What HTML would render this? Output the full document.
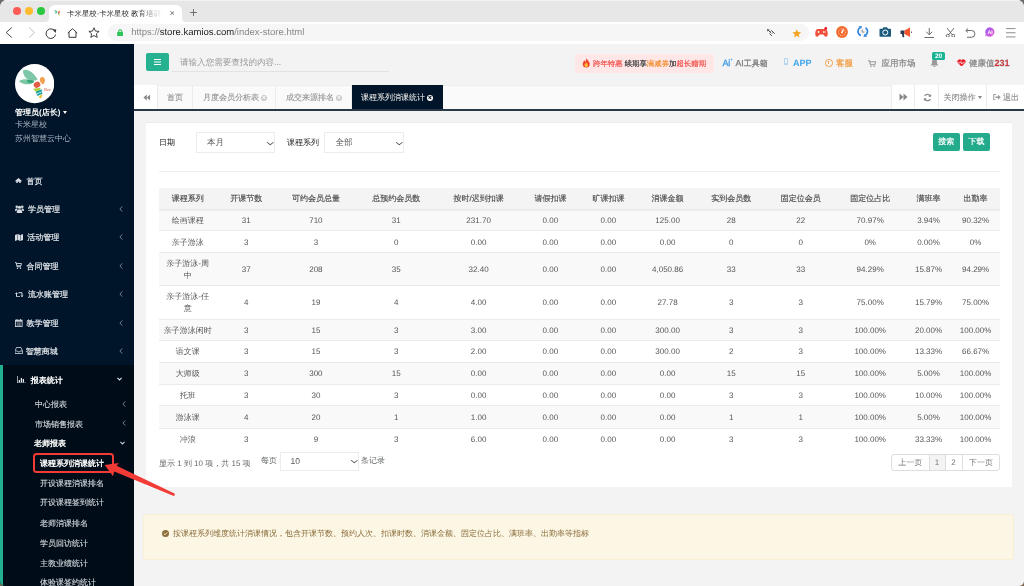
<!DOCTYPE html>
<html><head><meta charset="utf-8">
<style>
*{box-sizing:border-box;margin:0;padding:0}
html,body{width:1024px;height:586px;overflow:hidden;background:linear-gradient(#6a6a6a 50%,#7b6850 50%)}
body{text-rendering:geometricPrecision;font-family:"Liberation Sans",sans-serif;font-size:8px;color:#676a6c;position:relative}
.abs{position:absolute}
#win{will-change:transform;position:absolute;left:0;top:0;width:1024px;height:586px;border-radius:7px 7px 5px 5px;overflow:hidden;background:#f3f3f4}
/* browser chrome */
#tabbar{left:0;top:0;width:1024px;height:22px;background:#e7e7e7;box-shadow:inset 0 1px 0 #f2f2f2}
.light{width:8px;height:8px;border-radius:50%;top:7px}
#tab{left:49px;top:5px;width:133px;height:17px;background:#fff;border-radius:6px 6px 0 0}
#tabtitle{left:66.8px;top:7.5px;font-size:8px;color:#333;white-space:nowrap;width:106px;overflow:hidden;line-height:11px;transform:scale(0.93);transform-origin:0 50%;-webkit-mask-image:linear-gradient(90deg,#000 72%,transparent 97%)}
#addr{left:0;top:22px;width:1024px;height:22px;background:#fff}
#omni{left:107.5px;top:23.9px;width:701px;height:16.9px;background:#f6f6f6;border-radius:8.3px}
#url{left:131.2px;top:27px;font-size:9.5px;line-height:12px;color:#888;white-space:nowrap}
#url b{font-weight:normal;color:#222}
/* sidebar */
#side{left:0;top:44px;width:134px;height:542px;background:#001529}
#sub{left:0;top:365px;width:134px;height:221px;background:#000c17;border-left:3px solid #22b08f}
.mi{position:absolute;left:15px;color:#e2e6eb;font-size:8px;line-height:10px;white-space:nowrap;-webkit-text-stroke:0.2px #e2e6eb}
.mi .ic{display:inline-block;width:8px;margin-right:4px}
.chev{position:absolute;left:118px;color:#8e98a4;font-size:8px;line-height:10px}
.si{position:absolute;left:40px;color:#d3d8de;font-size:8px;line-height:10px;white-space:nowrap;-webkit-text-stroke:0.12px #d3d8de}
/* header */
#hdr{left:134px;top:44px;width:890px;height:41px;background:#f3f3f4}
#tabs{left:134px;top:85px;width:890px;height:25.5px;background:#fafafa;border-bottom:2px solid #2a394a;box-shadow:inset 0 1px 0 #eeeeee}
.x{display:inline-block;width:6px;height:6px;border-radius:50%;background:#c8c8c8;margin-left:2px;vertical-align:-0.5px;position:relative}
.x::before,.x::after{content:"";position:absolute;left:1.2px;top:2.55px;width:3.6px;height:0.9px;background:#fafafa;transform:rotate(45deg)}
.x::after{transform:rotate(-45deg)}
.x.w{background:#fff}.x.w::before,.x.w::after{background:#001529}
.tb{position:absolute;top:0;height:23.5px;line-height:25px;border-right:1px solid #ececec;color:#939393;font-size:8px;text-align:center;white-space:nowrap;-webkit-text-stroke:0.1px #939393}
/* panel */
#panel{left:146px;top:122px;width:866px;height:365px;background:#fff;border-top:1px solid #e9ebed}
.sel{position:absolute;height:20.2px;border:1px solid #ececec;background:#fff;color:#555;font-size:8.5px;line-height:18px;padding-left:10px}
.btn{position:absolute;height:18px;background:#23ab8c;color:#fff;border-radius:2px;font-size:8px;line-height:18px;text-align:center;-webkit-text-stroke:0.2px #fff}
.trh,.tr{position:absolute;left:159px;width:841px}
.trh{box-sizing:border-box;border-bottom:1px solid #ececec;background:#f4f4f4;color:#4a4a4a;-webkit-text-stroke:0.15px #4a4a4a}
.tr{border-top:1px solid #ebebeb;color:#555}
.tr.s{background:#f9f9f9}
.c{position:absolute;top:50%;transform:translate(-50%,calc(-50% + 0.8px));white-space:nowrap;text-align:center;font-size:8px;line-height:11.5px}
.lbl{color:#333;font-size:8px;line-height:10px;white-space:nowrap;-webkit-text-stroke:0.05px #333}
.dd{position:absolute;right:0.6px;top:8px;width:6px;height:3.6px;background:none}
.dd::before{content:"";position:absolute;left:0.9px;top:-1.6px;width:3.6px;height:3.6px;border-right:0.9px solid #555;border-bottom:0.9px solid #555;transform:scaleY(0.75) rotate(45deg)}
.pgi{top:454.5px;height:15.5px;line-height:15.5px;text-align:center;color:#777;font-size:8px}
#notice{left:143px;top:514.3px;width:871.4px;height:45.7px;background:#fcf6e4;border-radius:3px;border:1px solid #faefd5}
</style></head><body>
<div id="win">
  <div id="tabbar" class="abs"></div>
  <div class="abs light" style="left:12.5px;background:#fd5b55"></div>
  <div class="abs light" style="left:24.5px;background:#febc2e"></div>
  <div class="abs light" style="left:36.5px;background:#2ac840"></div>
  <div id="tab" class="abs"></div>
  <div class="abs" style="left:45px;top:18px;width:4px;height:4px;background:#fff"></div>
  <div class="abs" style="left:45px;top:18px;width:4px;height:4px;background:#e7e7e7;border-bottom-right-radius:4px"></div>
  <div class="abs" style="left:182px;top:18px;width:4px;height:4px;background:#fff"></div>
  <div class="abs" style="left:182px;top:18px;width:4px;height:4px;background:#e7e7e7;border-bottom-left-radius:4px"></div>
  <div id="tabtitle" class="abs">卡米星校-卡米星校 教育培训机构</div>
  <svg class="abs" style="left:169.7px;top:10.8px" width="4.6" height="4.2" viewBox="0 0 4.6 4.2"><path d="M0.2 0.1 L4.4 4.1 M4.4 0.1 L0.2 4.1" stroke="#555" stroke-width="0.8"/></svg>
  <svg class="abs" style="left:190px;top:9px" width="7" height="7" viewBox="0 0 7 7"><path d="M3.5 0 V7 M0 3.5 H7" stroke="#555" stroke-width="0.8"/></svg>
  <div id="addr" class="abs"></div>
  <div id="omni" class="abs"></div>
  <div id="url" class="abs">https://<b>store.kamios.com</b>/index-store.html</div>


  <svg class="abs" style="left:5px;top:27px" width="8" height="11" viewBox="0 0 8 11"><path d="M6.8 0.5 L1.2 5.5 L6.8 10.5" fill="none" stroke="#4a4a4a" stroke-width="1"/></svg>
  <svg class="abs" style="left:27.5px;top:27px" width="8" height="11" viewBox="0 0 8 11"><path d="M1 0.5 L6.6 5.5 L1 10.5" fill="none" stroke="#c0c0c0" stroke-width="1"/></svg>
  <svg class="abs" style="left:45px;top:27.5px" width="12" height="11" viewBox="0 0 12 11"><path d="M10.3 3.8 A4.8 4.8 0 1 0 10.6 6.5" fill="none" stroke="#3a3a3a" stroke-width="1"/><path d="M7.6 1.2 L11.3 1.4 L10.6 5Z" fill="#3a3a3a"/></svg>
  <svg class="abs" style="left:66.5px;top:27.5px" width="11" height="10" viewBox="0 0 11 10"><path d="M0.8 5 L5.5 0.7 L10.2 5 M2 4 V9.3 H9 V4" fill="none" stroke="#3a3a3a" stroke-width="1"/></svg>
  <svg class="abs" style="left:88px;top:26.5px" width="12" height="11.5" viewBox="0 0 24 23"><path d="M12 1.5 L14.9 8.2 L22.2 8.8 L16.7 13.6 L18.4 20.8 L12 17 L5.6 20.8 L7.3 13.6 L1.8 8.8 L9.1 8.2Z" fill="none" stroke="#3a3a3a" stroke-width="1.9" stroke-linejoin="miter"/></svg>
  <svg class="abs" style="left:116.8px;top:28.8px" width="6.5" height="7.5" viewBox="0 0 6.5 7.5"><path d="M1.7 3.5 V2.4 A1.55 1.55 0 0 1 4.8 2.4 V3.5" fill="none" stroke="#2bc458" stroke-width="1.1"/><rect x="0.2" y="3" width="6.1" height="4.2" rx="0.4" fill="#2bc458"/></svg>
  <svg class="abs" style="left:766.8px;top:28.8px" width="8.5" height="7.5" viewBox="0 0 17 15"><path d="M1.5 1.5 L8 8 M5 9 L10 14 M9 3 L15.5 9.5 M9 3 L6.5 5.5 M12.5 6.5 L10 9" fill="none" stroke="#555" stroke-width="2"/><path d="M0 0 L5.5 1 L1 5.5Z" fill="#555"/></svg>
  <svg class="abs" style="left:791.5px;top:28.5px" width="9.5" height="9" viewBox="0 0 24 23"><path d="M12 0.5 L15.2 7.8 L23.2 8.5 L17.1 13.8 L19 21.6 L12 17.4 L5 21.6 L6.9 13.8 L0.8 8.5 L8.8 7.8Z" fill="#f5a425"/></svg>
  <svg class="abs" style="left:814.5px;top:26.5px" width="13" height="10" viewBox="0 0 26 20"><path d="M6 4 H20 C24 4 25.5 9 25.5 14 C25.5 18 23.5 19.5 21.5 19.5 C19.5 19.5 18 16 16.5 15 H9.5 C8 16 6.5 19.5 4.5 19.5 C2.5 19.5 0.5 18 0.5 14 C0.5 9 2 4 6 4Z" fill="#f0503a"/><path d="M5 10 H9 M7 8 V12" stroke="#fff" stroke-width="1.6"/><circle cx="17" cy="10" r="1.3" fill="#fff"/><circle cx="20" cy="10" r="1.3" fill="#fff"/><circle cx="21.5" cy="2.8" r="2.8" fill="#e4162b"/></svg>
  <svg class="abs" style="left:836px;top:25.9px" width="12" height="12" viewBox="0 0 24 24"><circle cx="12" cy="12" r="11.8" fill="#f2682a"/><circle cx="12" cy="12.5" r="7" fill="none" stroke="#fff" stroke-width="1.4" stroke-dasharray="2 2.2"/><path d="M10 14.5 C10 11 13 7 15.5 5 C16 8 14.5 12 12.5 15Z" fill="#fff"/></svg>
  <svg class="abs" style="left:857.4px;top:25.9px" width="11.5" height="11.2" viewBox="0 0 23 22"><path d="M6 3 A9 9 0 0 0 8 19" fill="none" stroke="#2a82de" stroke-width="3.2"/><path d="M17 3 A9 9 0 0 1 15 19" fill="none" stroke="#2a82de" stroke-width="3.2"/><path d="M2.5 0.5 H10.5 L8 5.5Z M12.5 21.5 H20.5 L15 16.5Z" fill="#2a82de"/><circle cx="11.5" cy="11" r="6" fill="#eceff3"/><path d="M10.5 7 V12 H14.5" fill="none" stroke="#666" stroke-width="1.3"/></svg>
  <svg class="abs" style="left:878.5px;top:27px" width="12.5" height="10" viewBox="0 0 25 20"><path d="M1 5 Q1 3.5 2.5 3.5 H7 L9 0.5 H16 L18 3.5 H22.5 Q24 3.5 24 5 V18 Q24 19.5 22.5 19.5 H2.5 Q1 19.5 1 18Z" fill="#1d5b7d"/><circle cx="12.5" cy="11" r="5" fill="none" stroke="#fff" stroke-width="2"/></svg>
  <svg class="abs" style="left:899.5px;top:27px" width="13" height="10.5" viewBox="0 0 26 21"><path d="M1 7 H9 V14 H1Z M4 14 H8 L8.5 20.5 H5Z" fill="#2b3a55"/><path d="M9 7 L20 1 V20 L9 14Z" fill="#f2552c"/><path d="M23 9 V12" stroke="#2b3a55" stroke-width="1.5"/></svg>
  <svg class="abs" style="left:924px;top:27.5px" width="10.5" height="10" viewBox="0 0 21 20"><path d="M10.5 0 V13 M4.5 7.5 L10.5 13.5 L16.5 7.5 M1 19 H20" fill="none" stroke="#444" stroke-width="1.6"/></svg>
  <svg class="abs" style="left:944.5px;top:27.5px" width="11" height="9.5" viewBox="0 0 22 19"><path d="M4 0 L14.5 13.5 M18 0 L7.5 13.5" stroke="#444" stroke-width="1.5"/><circle cx="5.5" cy="15.5" r="3" fill="none" stroke="#444" stroke-width="1.5"/><circle cx="16.5" cy="15.5" r="3" fill="none" stroke="#444" stroke-width="1.5"/></svg>
  <svg class="abs" style="left:965px;top:27.5px" width="10.5" height="10" viewBox="0 0 21 20"><path d="M3 5 H13 A6.5 6.5 0 0 1 13 18.5 H4" fill="none" stroke="#444" stroke-width="1.6"/><path d="M6 1 L1.5 5 L6 9" fill="none" stroke="#444" stroke-width="1.6"/></svg>
  <svg class="abs" style="left:984.5px;top:27.3px" width="10" height="10" viewBox="0 0 20 20"><defs><linearGradient id="ai" x1="0" y1="0" x2="1" y2="1"><stop offset="0" stop-color="#8e5af5"/><stop offset="1" stop-color="#f060d0"/></linearGradient></defs><path d="M10 0.5 A9.5 9.5 0 1 1 3 17 L0.5 19.5 L1.5 14 A9.5 9.5 0 0 1 10 0.5Z" fill="url(#ai)"/><text x="10.3" y="14" font-size="10.5" font-weight="bold" fill="#fff" text-anchor="middle" font-family="Liberation Sans">AI</text></svg>
  <svg class="abs" style="left:1006px;top:28px" width="10" height="9.5" viewBox="0 0 20 19"><path d="M0 1.2 H19 M0 9.5 H19 M0 17.8 H19" stroke="#5a5a5a" stroke-width="1.4"/></svg>
  <svg class="abs" style="left:54px;top:9px" width="7" height="7" viewBox="0 0 14 14"><path d="M0 3 Q5 1 7 6 Q4 7 0 3Z" fill="#4caf80"/><path d="M1 8 Q5 5 7 7 Q4 10 1 8Z" fill="#5cc090"/><circle cx="9.5" cy="7" r="2" fill="#e85a3c"/><circle cx="11" cy="4.5" r="1.5" fill="#f0a040"/><path d="M7 9 L11 9 L9.5 12Z" fill="#2aa7a0"/><circle cx="10.5" cy="12" r="1.3" fill="#f2c230"/></svg>
  <div id="side" class="abs"></div>
  <div id="sub" class="abs"></div>
  <svg class="abs" style="left:15px;top:64.4px" width="39.3" height="39.3" viewBox="58 75 460 460">
    <circle cx="288" cy="305" r="230" fill="#fff"/>
    <path d="M152 150 C170 128 235 148 272 188 C300 218 318 242 322 256 C292 276 238 280 200 250 C168 224 150 190 152 150Z" fill="#7dc6a6"/>
    <path d="M105 276 C130 250 205 250 268 262 L282 286 C240 322 168 326 105 276Z" fill="#7dc6a6"/>
    <path d="M200 264 C232 262 262 266 280 276 L268 298 C242 302 220 296 198 282Z" fill="#38a877"/>
    <path d="M372 226 C397 223 412 245 410 270 C407 292 392 306 386 316 C366 301 346 282 349 256 C351 238 359 229 372 226Z" fill="#f1a352"/>
    <ellipse cx="316" cy="318" rx="40" ry="34" transform="rotate(-28 316 318)" fill="#e35c44"/>
    <path d="M268 366 L362 352 L322 418Z" fill="#b3ce3e"/>
    <path d="M300 402 L368 372 L378 394 L308 424Z" fill="#1ea5a6"/>
    <path d="M314 430 L374 404 L380 422 L322 450Z" fill="#1ea5a6"/>
    <path d="M340 452 L376 430 C380 452 372 472 356 480 C344 472 336 462 340 452Z" fill="#f3c233"/>
    <text x="398" y="392" font-size="52" fill="#d4503c" font-family="Liberation Serif" font-style="italic">Bee</text>
  </svg>
  <div class="abs" style="left:15px;top:107px;color:#fff;font-weight:bold;font-size:8px;line-height:11px;white-space:nowrap">管理员(店长)<span style="display:inline-block;border-top:3px solid #fff;border-left:2.6px solid transparent;border-right:2.6px solid transparent;margin-left:2.5px;vertical-align:1.5px"></span></div>
  <div class="abs" style="left:15px;top:119.6px;color:#a7b1c2;font-size:8px;line-height:10px">卡米星校</div>
  <div class="abs" style="left:15px;top:134.3px;color:#a7b1c2;font-size:8px;line-height:10px">苏州智慧云中心</div>

  <svg class="abs" style="left:15.4px;top:177.5px" width="7" height="5.5" viewBox="0 0 14 11"><path d="M7 0 L0 6 L1 7 L2.5 5.8 V11 H5.5 V7.5 H8.5 V11 H11.5 V5.8 L13 7 L14 6Z" fill="#d8dde4"/></svg>
  <div class="mi" style="left:26.6px;top:177.2px">首页</div>
  <svg class="abs" style="left:15px;top:205px" width="9" height="8" viewBox="0 0 18 16"><circle cx="9" cy="4.5" r="3.2" fill="#d8dde4"/><circle cx="3.5" cy="3.5" r="2.5" fill="#d8dde4"/><circle cx="14.5" cy="3.5" r="2.5" fill="#d8dde4"/><path d="M3.5 16 C3.5 10 5.5 8.5 9 8.5 C12.5 8.5 14.5 10 14.5 16Z M0 12 C0 8 1.5 7 3.5 7 C5 7 5.5 7.5 5.5 8 C4 9 3 10.5 3 12Z M18 12 C18 8 16.5 7 14.5 7 C13 7 12.5 7.5 12.5 8 C14 9 15 10.5 15 12Z" fill="#d8dde4"/></svg>
  <div class="mi" style="left:27.9px;top:205.2px">学员管理</div>
  <svg class="abs" style="left:15px;top:234px" width="8" height="7" viewBox="0 0 16 14"><path d="M0 2 L5 0 V12 L0 14Z M5.8 0 L10.2 2 V14 L5.8 12Z M11 2 L16 0 V12 L11 14Z" fill="#d8dde4"/></svg>
  <div class="mi" style="left:27.3px;top:233.4px">活动管理</div>
  <svg class="abs" style="left:15.4px;top:262px" width="7" height="7" viewBox="0 0 14 14"><path d="M0 1.2 H2.5 L4 9.5 H12 M3 3 H13 L12 7.5 H3.8" fill="none" stroke="#d8dde4" stroke-width="1.8"/><circle cx="5" cy="12.3" r="1.5" fill="#d8dde4"/><circle cx="11" cy="12.3" r="1.5" fill="#d8dde4"/></svg>
  <div class="mi" style="left:26.5px;top:261.6px">合同管理</div>
  <svg class="abs" style="left:15px;top:291.5px" width="8.5" height="5.5" viewBox="0 0 17 11"><path d="M3 3.5 V9.5 H10 M7 1.5 H14 V7.5" fill="none" stroke="#d8dde4" stroke-width="2"/><path d="M0 4 L3 0.3 L6 4Z M11 7 L14 10.7 L17 7Z" fill="#d8dde4"/></svg>
  <div class="mi" style="left:27.9px;top:290.2px">流水账管理</div>
  <svg class="abs" style="left:15.4px;top:318.5px" width="7.5" height="8" viewBox="0 0 15 16"><rect x="0.8" y="2.3" width="13.4" height="12.9" fill="none" stroke="#d8dde4" stroke-width="1.6"/><rect x="0.8" y="2.3" width="13.4" height="3" fill="#d8dde4"/><path d="M4 0 V3.5 M11 0 V3.5" stroke="#d8dde4" stroke-width="1.6"/><path d="M3 8 H12 M3 10.5 H12 M3 13 H12 M5.5 6 V15 M9.5 6 V15" stroke="#d8dde4" stroke-width="0.7"/></svg>
  <div class="mi" style="left:26.5px;top:318.9px">教学管理</div>
  <svg class="abs" style="left:15px;top:347px" width="7.5" height="7" viewBox="0 0 15 14"><path d="M3 1 H12 L15 8 V13 H0 V8Z" fill="none" stroke="#d8dde4" stroke-width="1.6"/><path d="M1 8 H5 L6 10 H9 L10 8 H14" fill="none" stroke="#d8dde4" stroke-width="1.5"/></svg>
  <div class="mi" style="left:25.8px;top:347.0px">智慧商城</div>
  <svg class="abs" style="left:118.5px;top:205.5px" width="4" height="6" viewBox="0 0 4 6"><path d="M3.3 0.4 L0.9 3 L3.3 5.6" fill="none" stroke="#8a93a0" stroke-width="0.85"/></svg>
  <svg class="abs" style="left:118.5px;top:234.0px" width="4" height="6" viewBox="0 0 4 6"><path d="M3.3 0.4 L0.9 3 L3.3 5.6" fill="none" stroke="#8a93a0" stroke-width="0.85"/></svg>
  <svg class="abs" style="left:118.5px;top:262.5px" width="4" height="6" viewBox="0 0 4 6"><path d="M3.3 0.4 L0.9 3 L3.3 5.6" fill="none" stroke="#8a93a0" stroke-width="0.85"/></svg>
  <svg class="abs" style="left:118.5px;top:291.0px" width="4" height="6" viewBox="0 0 4 6"><path d="M3.3 0.4 L0.9 3 L3.3 5.6" fill="none" stroke="#8a93a0" stroke-width="0.85"/></svg>
  <svg class="abs" style="left:118.5px;top:319.5px" width="4" height="6" viewBox="0 0 4 6"><path d="M3.3 0.4 L0.9 3 L3.3 5.6" fill="none" stroke="#8a93a0" stroke-width="0.85"/></svg>
  <svg class="abs" style="left:118.5px;top:347.8px" width="4" height="6" viewBox="0 0 4 6"><path d="M3.3 0.4 L0.9 3 L3.3 5.6" fill="none" stroke="#8a93a0" stroke-width="0.85"/></svg>

  <svg class="abs" style="left:17.3px;top:375.5px" width="9" height="7.5" viewBox="0 0 18 15"><path d="M0.8 0 V14.2 H18" fill="none" stroke="#e6e9ee" stroke-width="1.5"/><path d="M3.5 13 V8 H6 V13Z M7.5 13 V4 H10 V13Z M11.5 13 V6 H14 V13Z" fill="#e6e9ee"/></svg>
  <div class="mi" style="left:30.7px;top:375.6px;color:#fff;-webkit-text-stroke:0.35px #fff">报表统计</div>
  <svg class="abs" style="left:117px;top:377px" width="5" height="4" viewBox="0 0 5 4"><path d="M0.4 0.8 L2.5 3 L4.6 0.8" fill="none" stroke="#e0e3e8" stroke-width="1.1"/></svg>
  <div class="si" style="left:35px;top:399.6px">中心报表</div><svg class="abs" style="left:122px;top:400.5px" width="4" height="6" viewBox="0 0 4 6"><path d="M3.3 0.4 L0.9 3 L3.3 5.6" fill="none" stroke="#8a93a0" stroke-width="0.85"/></svg>
  <div class="si" style="left:35px;top:419.6px">市场销售报表</div><svg class="abs" style="left:122px;top:420.3px" width="4" height="6" viewBox="0 0 4 6"><path d="M3.3 0.4 L0.9 3 L3.3 5.6" fill="none" stroke="#8a93a0" stroke-width="0.85"/></svg>
  <div class="si" style="left:34px;top:439.1px;color:#fff;-webkit-text-stroke:0.35px #fff">老师报表</div><svg class="abs" style="left:120px;top:440.5px" width="5" height="4" viewBox="0 0 5 4"><path d="M0.4 0.8 L2.5 3 L4.6 0.8" fill="none" stroke="#c8ccd2" stroke-width="1.1"/></svg>
  <div class="abs" style="left:33.3px;top:453.3px;width:80.5px;height:19.3px;border:2px solid #f23a36;border-radius:3.5px"></div>
  <div class="si" style="top:459.1px;color:#fff;-webkit-text-stroke:0.35px #fff">课程系列消课统计</div>
  <div class="si" style="top:479.1px">开设课程消课排名</div>
  <div class="si" style="top:498.1px">开设课程签到统计</div>
  <div class="si" style="top:519.1px">老师消课排名</div>
  <div class="si" style="top:538.6px">学员回访统计</div>
  <div class="si" style="top:558.6px">主教业绩统计</div>
  <div class="si" style="top:577.6px">体验课签约统计</div>

  <div id="hdr" class="abs"></div>
  <div class="abs" style="left:146px;top:53px;width:23px;height:18px;background:#26b190;border-radius:2px"></div>
  <div class="abs" style="left:154px;top:58.5px;width:7px;height:1.3px;background:#fff;box-shadow:0 2.5px 0 #fff,0 5px 0 #fff"></div>
  <div class="abs" style="left:180px;top:57px;color:#999;font-size:9px;line-height:11px;white-space:nowrap;transform:scale(0.95);transform-origin:0 50%">请输入您需要查找的内容...</div>
  <div class="abs" style="left:172px;top:71px;width:217px;height:1px;background:#e3e3e3"></div>


  <div class="abs" style="left:575px;top:54px;width:139px;height:18.7px;background:#ffe7e8;border-radius:2.5px"></div>
  <svg class="abs" style="left:581.5px;top:58.3px" width="8.5" height="9.5" viewBox="0 0 17 19"><path d="M8.5 0.5 C10 4 15.5 6.5 15.5 12 A7 7 0 0 1 1.5 12 C1.5 8.5 4 7 4.5 4.5 C6 6 6.5 7.5 6.5 8.5 C7.5 6 8.5 3.5 8.5 0.5Z" fill="#f2452e"/><path d="M8.5 9 C10.5 11 12 12.5 12 14.5 A3.5 3.5 0 0 1 5 14.5 C5 12.5 7 11.5 8.5 9Z" fill="#ffc02e"/></svg>
  <div class="abs" style="left:592.5px;top:58.5px;font-size:8px;line-height:10px;white-space:nowrap;transform:scale(0.925);transform-origin:0 50%"><span style="color:#f0504a;-webkit-text-stroke:0.2px #f0504a">跨年特惠</span> <span style="color:#333;-webkit-text-stroke:0.2px #333">续期享</span><span style="color:#f08c2e;-webkit-text-stroke:0.2px #f08c2e">满减券</span><span style="color:#333;-webkit-text-stroke:0.2px #333">加</span><span style="color:#f0504a;-webkit-text-stroke:0.2px #f0504a">超长赠期</span></div>
  <div class="abs" style="left:722.5px;top:57.8px;color:#3c9ae8;font-size:9px;line-height:10px;letter-spacing:-0.3px;-webkit-text-stroke:0.3px #3c9ae8">Ai</div>
  <svg class="abs" style="left:730px;top:57.5px" width="3" height="3" viewBox="0 0 6 6"><path d="M3 0 L3.7 2.3 L6 3 L3.7 3.7 L3 6 L2.3 3.7 L0 3 L2.3 2.3Z" fill="#3c9ae8"/></svg>
  <div class="abs" style="left:735.5px;top:58px;color:#777;font-size:8px;line-height:10px;white-space:nowrap;-webkit-text-stroke:0.25px #777"><span style="font-size:8.6px">AI</span>工具箱</div>
  <svg class="abs" style="left:784px;top:58.3px" width="4" height="7" viewBox="0 0 8 14"><rect x="0.8" y="0.8" width="6.4" height="12.4" rx="1.2" fill="none" stroke="#6db8f0" stroke-width="1.1"/><rect x="3" y="10.5" width="2" height="1.2" fill="#48a8ee"/></svg>
  <div class="abs" style="left:793px;top:58px;color:#3ea6ec;font-weight:bold;font-size:9px;line-height:10px">APP</div>
  <div class="abs" style="left:825px;top:59px;width:7.5px;height:7.5px;border:1.2px solid #f2a04a;border-radius:50%"></div>
  <div class="abs" style="left:828.3px;top:60.5px;width:1px;height:3px;background:#f2a04a"></div>
  <div class="abs" style="left:836px;top:58px;color:#f2a04a;font-size:8.5px;line-height:10px;white-space:nowrap;-webkit-text-stroke:0.3px #f2a04a">客服</div>
  <svg class="abs" style="left:868px;top:59.5px" width="8" height="7" viewBox="0 0 8 7"><path d="M0 0.8 H1.5 L2.5 4.8 H6.8 L7.6 1.8 H2" fill="none" stroke="#999" stroke-width="1.1"/><circle cx="3" cy="6.2" r="0.8" fill="#999"/><circle cx="6.2" cy="6.2" r="0.8" fill="#999"/></svg>
  <div class="abs" style="left:881.5px;top:58px;color:#888;font-size:8.5px;line-height:10px;white-space:nowrap;-webkit-text-stroke:0.25px #888">应用市场</div>
  <svg class="abs" style="left:930px;top:59px" width="9" height="8" viewBox="0 0 9 8"><path d="M4.5 0 C2.5 0 2 1.5 2 3.5 C2 5 1.5 5.8 0.3 6.6 H8.7 C7.5 5.8 7 5 7 3.5 C7 1.5 6.5 0 4.5 0Z M3.3 7 H5.7 A1.2 1 0 0 1 3.3 7Z" fill="#999"/></svg>
  <div class="abs" style="left:932px;top:52px;width:13px;height:8px;background:#1ab394;border-radius:1.5px;color:#fff;font-weight:bold;font-size:6.5px;line-height:9.4px;text-align:center">20</div>
  <svg class="abs" style="left:956.5px;top:58.8px" width="9" height="7.5" viewBox="0 0 18 15"><path d="M9 15 L1.8 8 A4.3 4.3 0 0 1 9 2.6 A4.3 4.3 0 0 1 16.2 8Z" fill="#e8202a"/><path d="M2.5 7.5 H6 L7.5 5 L9.5 10 L11 7.5 H15.5" fill="none" stroke="#fff" stroke-width="1.4"/></svg>
  <div class="abs" style="left:969px;top:58px;color:#888;font-size:8.5px;line-height:10px;white-space:nowrap;-webkit-text-stroke:0.25px #888">健康值<span style="color:#e8202a;font-weight:bold;font-size:9px">231</span></div>
  <div id="tabs" class="abs">
    <div class="tb" style="left:0;width:24px;background:#fff;color:#888;font-size:9px">
      <svg width="7.5" height="7" viewBox="0 0 9 8" style="position:absolute;left:9px;top:9px"><path d="M4.5 0.5 L0.5 4 L4.5 7.5Z M8.5 0.5 L4.5 4 L8.5 7.5Z" fill="#888"/></svg>
    </div>
    <div class="tb" style="left:24px;width:35px">首页</div>
    <div class="tb" style="left:59px;width:83px;text-align:left;padding-left:10px">月度会员分析表<span class="x"></span></div>
    <div class="tb" style="left:142px;width:76px;text-align:left;padding-left:10px">成交来源排名<span class="x"></span></div>
    <div class="tb" style="left:218px;width:91px;background:#001529;color:#fff;text-align:left;padding-left:9px;border-right:none">课程系列消课统计<span class="x w"></span></div>
    <div class="tb" style="left:757px;width:24px;background:#fff;border-left:1px solid #ececec">
      <svg width="9" height="8" viewBox="0 0 9 8" style="position:absolute;left:7px;top:8px"><path d="M0.5 0.5 L4.5 4 L0.5 7.5Z M4.5 0.5 L8.5 4 L4.5 7.5Z" fill="#888"/></svg>
    </div>
    <div class="tb" style="left:781px;width:24px;background:#fff">
      <svg width="9" height="9" viewBox="0 0 10 10" style="position:absolute;left:7.5px;top:7.5px"><path d="M8.2 3.6 A3.6 3.6 0 0 0 1.8 3.2 M1.8 6.4 A3.6 3.6 0 0 0 8.2 6.8" fill="none" stroke="#888" stroke-width="1.4"/><path d="M9 1 L9 4.3 L5.9 4.3Z M1 9 L1 5.7 L4.1 5.7Z" fill="#888"/></svg>
    </div>
    <div class="tb" style="left:805px;width:48px;background:#fff;color:#888">关闭操作<span style="display:inline-block;border-top:3px solid #888;border-left:2.5px solid transparent;border-right:2.5px solid transparent;margin-left:2px;vertical-align:1px"></span></div>
    <div class="tb" style="left:853px;width:37px;background:#fff;color:#888;border-right:none;text-align:left;padding-left:16px">退出<svg width="8" height="6.5" viewBox="0 0 16 13" style="position:absolute;left:5.7px;top:8.8px"><path d="M6 1 H1.5 V12 H6" fill="none" stroke="#999" stroke-width="2"/><path d="M5 5 H10 V1.5 L15.5 6.5 L10 11.5 V8 H5Z" fill="#999"/></svg></div>
  </div>

  <div id="panel" class="abs"></div>
  <div class="abs lbl" style="left:159px;top:138px">日期</div>
  <div class="sel" style="left:196px;top:132.4px;width:79px">本月<span class="dd"></span></div>
  <div class="abs lbl" style="left:287px;top:138px">课程系列</div>
  <div class="sel" style="left:324.4px;top:132.4px;width:79.2px">全部<span class="dd"></span></div>
  <div class="btn" style="left:932.5px;top:132.5px;width:27.5px">搜索</div>
  <div class="btn" style="left:962.7px;top:132.5px;width:27.7px">下载</div>
  <div class="abs" style="left:159px;top:171px;width:841px;height:1px;background:#eceeef"></div>
  <div class="abs" style="left:159px;top:457.5px;color:#676a6c;white-space:nowrap;line-height:11px">显示 1 到 10 项，共 15 项</div>
  <div class="abs" style="left:261px;top:455px;color:#676a6c;white-space:nowrap;line-height:11px">每页</div>
  <div class="sel" style="left:279.5px;top:452px;width:79px;height:18.5px;line-height:17px">10<span class="dd" style="top:7px"></span></div>
  <div class="abs" style="left:361px;top:455px;color:#676a6c;white-space:nowrap;line-height:11px">条记录</div>
  <div class="abs pg" style="left:891px;top:453.5px;width:108.8px;height:17.5px;border:1px solid #dddddd;border-radius:3px"></div>
  <div class="abs pgi" style="left:892px;width:36.5px">上一页</div>
  <div class="abs pgi" style="left:928.5px;width:17px;background:#f4f4f4;border-left:1px solid #ddd;border-right:1px solid #ddd">1</div>
  <div class="abs pgi" style="left:945.5px;width:17px;border-right:1px solid #ddd">2</div>
  <div class="abs pgi" style="left:962.5px;width:37px">下一页</div>
  <div class="trh" style="top:188px;height:21.5px">
<span class="c" style="left:28.7px">课程系列</span>
<span class="c" style="left:87.3px">开课节数</span>
<span class="c" style="left:156.9px">可约会员总量</span>
<span class="c" style="left:237.3px">总预约会员数</span>
<span class="c" style="left:319.6px">按时/迟到扣课</span>
<span class="c" style="left:391.4px">请假扣课</span>
<span class="c" style="left:449.4px">旷课扣课</span>
<span class="c" style="left:508.6px">消课金额</span>
<span class="c" style="left:572.2px">实到会员数</span>
<span class="c" style="left:641.8px">固定位会员</span>
<span class="c" style="left:711.2px">固定位占比</span>
<span class="c" style="left:769.5px">满班率</span>
<span class="c" style="left:816.6px">出勤率</span>
</div>
<div class="tr s" style="top:209.5px;height:20.9px">
<span class="c" style="left:28.7px">绘画课程</span>
<span class="c" style="left:87.3px">31</span>
<span class="c" style="left:156.9px">710</span>
<span class="c" style="left:237.3px">31</span>
<span class="c" style="left:319.6px">231.70</span>
<span class="c" style="left:391.4px">0.00</span>
<span class="c" style="left:449.4px">0.00</span>
<span class="c" style="left:508.6px">125.00</span>
<span class="c" style="left:572.2px">28</span>
<span class="c" style="left:641.8px">22</span>
<span class="c" style="left:711.2px">70.97%</span>
<span class="c" style="left:769.5px">3.94%</span>
<span class="c" style="left:816.6px">90.32%</span>
</div>
<div class="tr" style="top:230.4px;height:21.9px">
<span class="c" style="left:28.7px">亲子游泳</span>
<span class="c" style="left:87.3px">3</span>
<span class="c" style="left:156.9px">3</span>
<span class="c" style="left:237.3px">0</span>
<span class="c" style="left:319.6px">0.00</span>
<span class="c" style="left:391.4px">0.00</span>
<span class="c" style="left:449.4px">0.00</span>
<span class="c" style="left:508.6px">0.00</span>
<span class="c" style="left:572.2px">0</span>
<span class="c" style="left:641.8px">0</span>
<span class="c" style="left:711.2px">0%</span>
<span class="c" style="left:769.5px">0.00%</span>
<span class="c" style="left:816.6px">0%</span>
</div>
<div class="tr s" style="top:252.3px;height:33.1px">
<span class="c" style="left:28.7px">亲子游泳-周<br>中</span>
<span class="c" style="left:87.3px">37</span>
<span class="c" style="left:156.9px">208</span>
<span class="c" style="left:237.3px">35</span>
<span class="c" style="left:319.6px">32.40</span>
<span class="c" style="left:391.4px">0.00</span>
<span class="c" style="left:449.4px">0.00</span>
<span class="c" style="left:508.6px">4,050.86</span>
<span class="c" style="left:572.2px">33</span>
<span class="c" style="left:641.8px">33</span>
<span class="c" style="left:711.2px">94.29%</span>
<span class="c" style="left:769.5px">15.87%</span>
<span class="c" style="left:816.6px">94.29%</span>
</div>
<div class="tr" style="top:285.4px;height:33.1px">
<span class="c" style="left:28.7px">亲子游泳-任<br>意</span>
<span class="c" style="left:87.3px">4</span>
<span class="c" style="left:156.9px">19</span>
<span class="c" style="left:237.3px">4</span>
<span class="c" style="left:319.6px">4.00</span>
<span class="c" style="left:391.4px">0.00</span>
<span class="c" style="left:449.4px">0.00</span>
<span class="c" style="left:508.6px">27.78</span>
<span class="c" style="left:572.2px">3</span>
<span class="c" style="left:641.8px">3</span>
<span class="c" style="left:711.2px">75.00%</span>
<span class="c" style="left:769.5px">15.79%</span>
<span class="c" style="left:816.6px">75.00%</span>
</div>
<div class="tr s" style="top:318.5px;height:21.8px">
<span class="c" style="left:28.7px">亲子游泳闲时</span>
<span class="c" style="left:87.3px">3</span>
<span class="c" style="left:156.9px">15</span>
<span class="c" style="left:237.3px">3</span>
<span class="c" style="left:319.6px">3.00</span>
<span class="c" style="left:391.4px">0.00</span>
<span class="c" style="left:449.4px">0.00</span>
<span class="c" style="left:508.6px">300.00</span>
<span class="c" style="left:572.2px">3</span>
<span class="c" style="left:641.8px">3</span>
<span class="c" style="left:711.2px">100.00%</span>
<span class="c" style="left:769.5px">20.00%</span>
<span class="c" style="left:816.6px">100.00%</span>
</div>
<div class="tr" style="top:340.3px;height:21.2px">
<span class="c" style="left:28.7px">语文课</span>
<span class="c" style="left:87.3px">3</span>
<span class="c" style="left:156.9px">15</span>
<span class="c" style="left:237.3px">3</span>
<span class="c" style="left:319.6px">2.00</span>
<span class="c" style="left:391.4px">0.00</span>
<span class="c" style="left:449.4px">0.00</span>
<span class="c" style="left:508.6px">300.00</span>
<span class="c" style="left:572.2px">2</span>
<span class="c" style="left:641.8px">3</span>
<span class="c" style="left:711.2px">100.00%</span>
<span class="c" style="left:769.5px">13.33%</span>
<span class="c" style="left:816.6px">66.67%</span>
</div>
<div class="tr s" style="top:361.5px;height:22.0px">
<span class="c" style="left:28.7px">大师级</span>
<span class="c" style="left:87.3px">3</span>
<span class="c" style="left:156.9px">300</span>
<span class="c" style="left:237.3px">15</span>
<span class="c" style="left:319.6px">0.00</span>
<span class="c" style="left:391.4px">0.00</span>
<span class="c" style="left:449.4px">0.00</span>
<span class="c" style="left:508.6px">0.00</span>
<span class="c" style="left:572.2px">15</span>
<span class="c" style="left:641.8px">15</span>
<span class="c" style="left:711.2px">100.00%</span>
<span class="c" style="left:769.5px">5.00%</span>
<span class="c" style="left:816.6px">100.00%</span>
</div>
<div class="tr" style="top:383.5px;height:21.8px">
<span class="c" style="left:28.7px">托班</span>
<span class="c" style="left:87.3px">3</span>
<span class="c" style="left:156.9px">30</span>
<span class="c" style="left:237.3px">3</span>
<span class="c" style="left:319.6px">0.00</span>
<span class="c" style="left:391.4px">0.00</span>
<span class="c" style="left:449.4px">0.00</span>
<span class="c" style="left:508.6px">0.00</span>
<span class="c" style="left:572.2px">3</span>
<span class="c" style="left:641.8px">3</span>
<span class="c" style="left:711.2px">100.00%</span>
<span class="c" style="left:769.5px">10.00%</span>
<span class="c" style="left:816.6px">100.00%</span>
</div>
<div class="tr s" style="top:405.3px;height:22.3px">
<span class="c" style="left:28.7px">游泳课</span>
<span class="c" style="left:87.3px">4</span>
<span class="c" style="left:156.9px">20</span>
<span class="c" style="left:237.3px">1</span>
<span class="c" style="left:319.6px">1.00</span>
<span class="c" style="left:391.4px">0.00</span>
<span class="c" style="left:449.4px">0.00</span>
<span class="c" style="left:508.6px">0.00</span>
<span class="c" style="left:572.2px">1</span>
<span class="c" style="left:641.8px">1</span>
<span class="c" style="left:711.2px">100.00%</span>
<span class="c" style="left:769.5px">5.00%</span>
<span class="c" style="left:816.6px">100.00%</span>
</div>
<div class="tr" style="top:427.6px;height:21.4px">
<span class="c" style="left:28.7px">冲浪</span>
<span class="c" style="left:87.3px">3</span>
<span class="c" style="left:156.9px">9</span>
<span class="c" style="left:237.3px">3</span>
<span class="c" style="left:319.6px">6.00</span>
<span class="c" style="left:391.4px">0.00</span>
<span class="c" style="left:449.4px">0.00</span>
<span class="c" style="left:508.6px">0.00</span>
<span class="c" style="left:572.2px">3</span>
<span class="c" style="left:641.8px">3</span>
<span class="c" style="left:711.2px">100.00%</span>
<span class="c" style="left:769.5px">33.33%</span>
<span class="c" style="left:816.6px">100.00%</span>
</div>
  <div id="notice" class="abs"></div>
  <svg class="abs" style="left:162px;top:529.6px" width="7" height="7" viewBox="0 0 14 14"><circle cx="7" cy="7" r="7" fill="#8b6e3c"/><path d="M3.8 7.2 L6 9.4 L10.3 5" fill="none" stroke="#fcf7e4" stroke-width="2"/></svg>
  <div class="abs" style="left:173px;top:528.7px;color:#8a6d3b;white-space:nowrap;line-height:10px;font-size:8px">按课程系列维度统计消课情况，包含开课节数、预约人次、扣课时数、消课金额、固定位占比、满班率、出勤率等指标</div>
  <svg class="abs" style="left:100px;top:455px" width="80" height="45" viewBox="0 0 80 45"><path d="M4.7 9.9 L18.9 8 L16.6 10.8 L74 38.2 Q76 39.6 73.8 40.9 L14.2 16.4 L13 21.2Z" fill="#f23a36"/></svg>
</div>
</body></html>
